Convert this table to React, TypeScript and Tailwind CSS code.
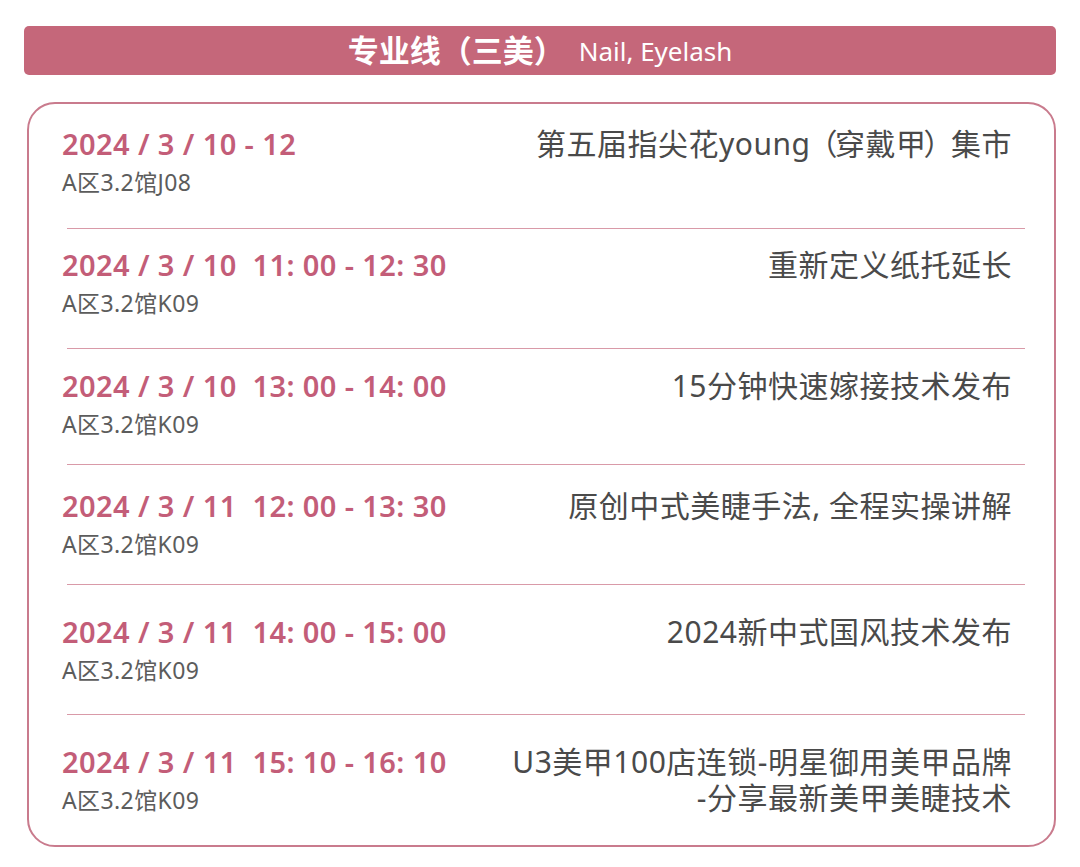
import React from "react";

const CJK = "font-['Noto_Sans','Noto_Sans_CJK_SC',sans-serif]";

const Paren = ({ c }: { c: string }) => <span className="-mx-[3px]">{c}</span>;

const rows: { date: string; loc: string; title: React.ReactNode[]; h: string; pt: string }[] = [
  {
    date: "2024 / 3 / 10 - 12",
    loc: "A区3.2馆J08",
    title: [
      <>
        第五届指尖花young<Paren c="（" />穿戴甲<Paren c="）" />集市
      </>,
    ],
    h: "h-[125px]",
    pt: "pt-[25px]",
  },
  { date: "2024 / 3 / 10  11: 00 - 12: 30", loc: "A区3.2馆K09", title: ["重新定义纸托延长"], h: "h-[120px]", pt: "pt-[21px]" },
  { date: "2024 / 3 / 10  13: 00 - 14: 00", loc: "A区3.2馆K09", title: ["15分钟快速嫁接技术发布"], h: "h-[116px]", pt: "pt-[22px]" },
  { date: "2024 / 3 / 11  12: 00 - 13: 30", loc: "A区3.2馆K09", title: ["原创中式美睫手法, 全程实操讲解"], h: "h-[120px]", pt: "pt-[26px]" },
  { date: "2024 / 3 / 11  14: 00 - 15: 00", loc: "A区3.2馆K09", title: ["2024新中式国风技术发布"], h: "h-[130px]", pt: "pt-[32px]" },
  {
    date: "2024 / 3 / 11  15: 10 - 16: 10",
    loc: "A区3.2馆K09",
    title: ["U3美甲100店连锁-明星御用美甲品牌", "-分享最新美甲美睫技术"],
    h: "h-[130px]",
    pt: "pt-[32px]",
  },
];

export default function App() {
  return (
    <div className={`w-[1080px] h-[867px] bg-white ${CJK} pt-[26px] px-[24px]`}>
      {/* header bar */}
      <div className="h-[49px] bg-[#c5677a] rounded-[5px] flex items-center justify-center gap-[14px] text-white">
        <span className="text-[31px] font-bold leading-none">专业线（三美）</span>
        <span className="text-[26px] leading-none">Nail, Eyelash</span>
      </div>

      {/* schedule card */}
      <div className="mt-[27px] ml-[3px] border-2 border-[#c97b8d] rounded-[28px]">
        {rows.map((r, i) => (
          <div
            key={i}
            className={`${r.h} ${r.pt} ml-[38px] mr-[29px] flex justify-between ${i < rows.length - 1 ? "border-b border-[#d99aa8]" : ""}`}
          >
            <div className="-ml-[5px]">
              <div className="text-[#c35d78] text-[29px] font-semibold leading-none whitespace-pre tracking-[0.4px]">{r.date}</div>
              <div className="text-[#5c5c5c] text-[23px] mt-[13px] leading-none tracking-[0.4px]">{r.loc}</div>
            </div>
            <div className="text-[#4a4a4a] text-[30px] leading-[36px] text-right -mt-[3px] mr-[13px] tracking-[0.5px]">
              {r.title.map((t, j) => (
                <div key={j} className="h-[36px]">
                  {t}
                </div>
              ))}
            </div>
          </div>
        ))}
      </div>
    </div>
  );
}
